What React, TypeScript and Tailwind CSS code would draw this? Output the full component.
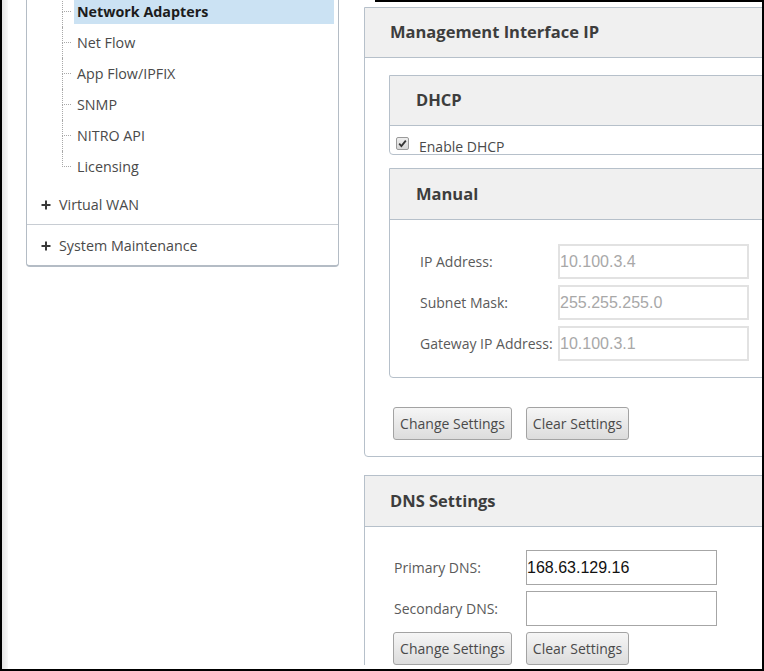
import React from "react";

const FONT = { fontFamily: '"Open Sans", "Noto Sans", sans-serif' };

function Plus() {
  return (
    <svg width="10" height="10" viewBox="0 0 10 10" className="shrink-0">
      <path d="M5 0.5V9.5M0.5 5H9.5" stroke="#3a3a3a" strokeWidth="2" />
    </svg>
  );
}

function TreeRow({ label, active, last }: { label: string; active?: boolean; last?: boolean }) {
  return (
    <div className="flex h-[31px] items-stretch">
      <div className="ml-[35px] flex w-[9px] flex-col">
        <div className="h-1/2 border-b border-l border-dotted border-[#a8a8a8]" />
        <div className={"h-1/2 border-l border-dotted " + (last ? "border-transparent" : "border-[#a8a8a8]")} />
      </div>
      <div className="ml-[3px] mr-[4px] flex flex-1 items-center">
        <div
          className={
            "flex h-[24px] w-full items-center px-[3px] text-[14.3px] " +
            (active ? "bg-[#cbe2f3] font-bold text-[#1c1c1c]" : "text-[#4a4a4a]")
          }
        >
          {label}
        </div>
      </div>
    </div>
  );
}

function Btn({ label, w }: { label: string; w: string }) {
  return (
    <button
      className={
        "flex h-[33px] items-center justify-center rounded-[3px] border border-[#a3a3a3] bg-gradient-to-b from-[#f6f6f6] to-[#dcdcdc] text-[14px] text-[#4a4a4a] " +
        w
      }
    >
      {label}
    </button>
  );
}

function Field({ label, value, disabled, labelW }: { label: string; value: string; disabled?: boolean; labelW: string }) {
  return (
    <div className="flex items-center">
      <div className={"text-[14px] text-[#5a5a5a] " + labelW}>{label}</div>
      <div
        className={
          "flex h-[35px] w-[191px] items-center text-[16px] " +
          (disabled ? "border-2 border-[#e2e2e2] pl-0 text-[#a8a8a8]" : "border border-[#a6a6a6] pl-0 text-[#111]")
        }
        style={{ fontFamily: '"Liberation Sans", Arial, sans-serif' }}
      >
        {value}
      </div>
    </div>
  );
}

export default function App() {
  return (
    <div
      className="flex h-[671px] w-[764px] overflow-hidden border-b-2 border-l-2 border-r-2 border-black bg-white"
      style={FONT}
    >
      {/* left column */}
      <div className="flex w-[362px] shrink-0">
        <div className="w-[6px] bg-gradient-to-r from-[#e4e4e4] to-[#f8f8f8]" />
        <div className="ml-[18px] w-[313px]">
          <div className="rounded-b-[4px] border-x border-b-2 border-[#b4bcc5]">
            <div className="-mt-[4px]">
              <TreeRow label="Network Adapters" active />
              <TreeRow label="Net Flow" />
              <TreeRow label="App Flow/IPFIX" />
              <TreeRow label="SNMP" />
              <TreeRow label="NITRO API" />
              <TreeRow label="Licensing" last />
            </div>
            <div className="flex h-[42px] items-center pl-[14px] pt-[4px] text-[14.3px] text-[#4a4a4a]">
              <Plus />
              <span className="ml-[8px]">Virtual WAN</span>
            </div>
            <div className="flex h-[41px] items-center border-t border-[#c8cdd3] pl-[14px] pt-[1px] text-[14.3px] text-[#4a4a4a]">
              <Plus />
              <span className="ml-[8px]">System Maintenance</span>
            </div>
          </div>
        </div>
      </div>

      {/* right column */}
      <div className="flex min-w-0 flex-1 flex-col">
        <div className="ml-[11px] h-[2px] bg-black" />
        <div className="mt-[5px] w-[430px] shrink-0 rounded-b-[4px] border border-[#b6c0ca]">
          <div className="flex h-[50px] items-center border-b border-[#b6c0ca] bg-[#f0f0f0] pl-[25px] text-[16.5px] font-bold text-[#3d3d3d]">
            Management Interface IP
          </div>
          <div className="pb-[16px] pl-[24px] pt-[17px]">
            <div className="w-[420px] rounded-bl-[4px] border border-[#b6c0ca]">
              <div className="flex h-[50px] items-center border-b border-[#b6c0ca] bg-[#f0f0f0] pl-[26px] text-[16.5px] font-bold text-[#3d3d3d]">
                DHCP
              </div>
              <div className="flex h-[28px] items-start pl-[6px] pt-[11px]">
                <span className="flex h-[13px] w-[13px] items-center justify-center rounded-[2px] border border-[#9a9a9a] bg-gradient-to-b from-[#eeeeee] to-[#d6d6d6]">
                  <svg width="11" height="11" viewBox="0 0 11 11">
                    <path d="M2.2 5.6L4.4 8L8.8 2.6" fill="none" stroke="#333" strokeWidth="1.8" />
                  </svg>
                </span>
                <span className="ml-[10px] text-[14px] leading-[19px] text-[#4a4a4a]">Enable DHCP</span>
              </div>
            </div>
            <div className="mt-[13px] w-[420px] rounded-bl-[4px] border border-[#b6c0ca]">
              <div className="flex h-[51px] items-center border-b border-[#b6c0ca] bg-[#f0f0f0] pl-[26px] text-[16.5px] font-bold text-[#3d3d3d]">
                Manual
              </div>
              <div className="flex flex-col gap-[6px] pb-[16px] pl-[30px] pt-[24px]">
                <Field label="IP Address:" value="10.100.3.4" disabled labelW="w-[138px]" />
                <Field label="Subnet Mask:" value="255.255.255.0" disabled labelW="w-[138px]" />
                <Field label="Gateway IP Address:" value="10.100.3.1" disabled labelW="w-[138px]" />
              </div>
            </div>
            <div className="ml-[4px] mt-[29px] flex gap-[14px]">
              <Btn label="Change Settings" w="w-[119px]" />
              <Btn label="Clear Settings" w="w-[103px]" />
            </div>
          </div>
        </div>

        <div className="mt-[18px] w-[430px] shrink-0 border-x border-t border-[#b6c0ca]">
          <div className="flex h-[51px] items-center border-b border-[#b6c0ca] bg-[#f0f0f0] pl-[25px] text-[16.5px] font-bold text-[#3d3d3d]">
            DNS Settings
          </div>
          <div className="flex flex-col gap-[6px] pl-[29px] pt-[23px]">
            <Field label="Primary DNS:" value="168.63.129.16" labelW="w-[132px]" />
            <Field label="Secondary DNS:" value="" labelW="w-[132px]" />
            <div className="-ml-[1px] flex gap-[14px]">
              <Btn label="Change Settings" w="w-[119px]" />
              <Btn label="Clear Settings" w="w-[103px]" />
            </div>
          </div>
        </div>
      </div>
    </div>
  );
}
